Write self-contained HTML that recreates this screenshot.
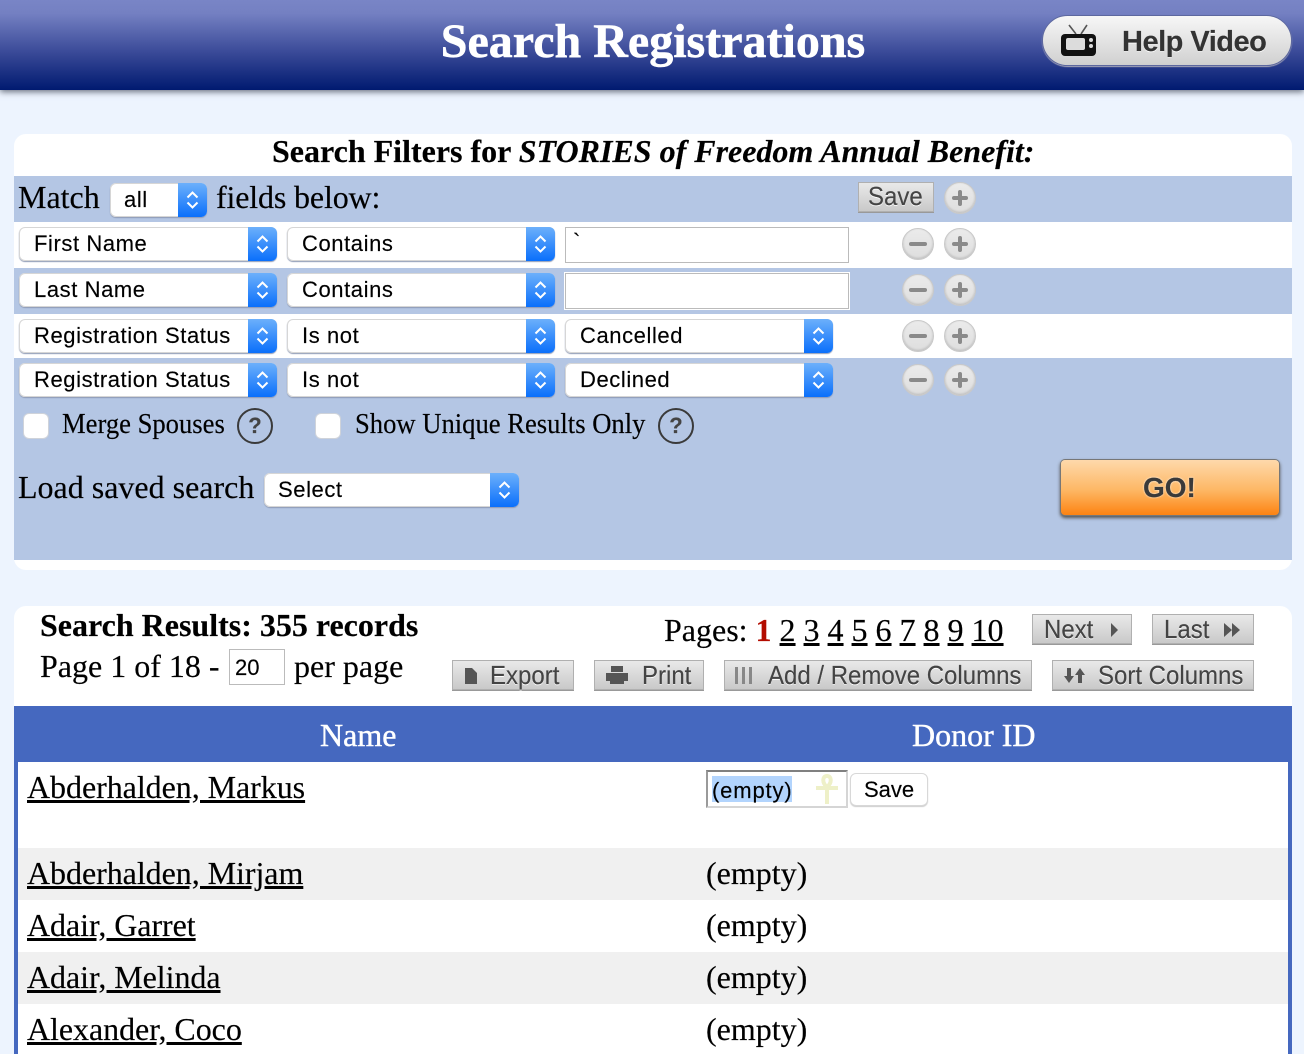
<!DOCTYPE html>
<html><head><meta charset="utf-8"><title>Search Registrations</title>
<style>
html,body{margin:0;padding:0;width:1304px;height:1054px;overflow:hidden;background:#edf4fe}
body{position:relative;font-family:"Liberation Serif",serif;color:#000;-webkit-text-stroke:.15px currentColor}
div,span,a.t{position:absolute;white-space:nowrap}
.t{line-height:1}
.sel{background:#fff;border-radius:6px;box-shadow:inset 0 0 0 1px #d6d6d6,0 1px 1px #8e9ab5;overflow:hidden;height:34px}
.sel b{position:absolute;right:0;top:0;bottom:0;width:29px;background:linear-gradient(#6cb0fb,#0a6ffb)}
.sel svg{position:absolute;right:7px;top:7px}
.sel span{top:6px;font:22px/22px "Liberation Sans",sans-serif;left:15px;letter-spacing:.58px}
.rb{width:30px;height:30px;border-radius:50%;background:linear-gradient(#ebebeb,#dedede);border:1px solid #c9c9c9;box-shadow:inset 0 -1px 2px #bbb}
.rb:before{content:"";position:absolute;left:6px;top:13px;width:18px;height:4px;background:#8a8a8a;border-radius:2px}
.plus:before{left:7px;width:16px}
.plus:after{content:"";position:absolute;left:13px;top:7px;width:4px;height:16px;background:#8a8a8a;border-radius:2px}
.btn{background:linear-gradient(#e9e9e9,#c9c9c9);border:1px solid #b0b0b0;box-sizing:border-box;height:30px;box-shadow:0 1px 0 #999;color:#444}
.btn span{top:1px;font:26px/26px "Liberation Sans",sans-serif;transform-origin:0 0;transform:scaleX(.923);text-shadow:0 1px 0 #fff}
.cb{width:24px;height:24px;background:#fff;border-radius:5px;box-shadow:0 0 0 1px #cfd3da}
.q{width:32px;height:32px;border:2px solid #3a3a3a;border-radius:50%;text-align:center;font:bold 22px/32px "Liberation Sans",sans-serif;color:#444}
.inp{background:#fff;box-sizing:border-box;border:1px solid #bbb}
.row{left:14px;width:1278px}
.name{left:27px;font-size:32px;line-height:36px;text-decoration:underline;color:#000;letter-spacing:-.05px}
.em{left:706px;font-size:32px;line-height:36px}
.lbl{top:409px;font-size:28px;line-height:32px;transform-origin:0 0;transform:scaleX(.95)}
</style></head><body>
<svg width="0" height="0" style="position:absolute"><symbol id="ar" viewBox="0 0 15 20"><path d="M2.500 7.500 7.500 2.500 12.500 7.500M2.500 12.500 7.500 17.500 12.500 12.500" fill="none" stroke="#fff" stroke-width="2"/></symbol></svg>

<div style="left:0;top:0;width:1304px;height:90px;background:linear-gradient(#7985c6 0,#7480c2 15%,#3a4a98 58%,#001a70 100%);box-shadow:0 2px 6px #6b7280"></div>
<span class="t" style="left:0;width:1306px;text-align:center;top:16px;font:bold 48px/52px 'Liberation Serif',serif;color:#fff;-webkit-text-stroke:.5px #fff">Search Registrations</span>

<div style="left:1042px;top:15px;width:250px;height:51px;box-sizing:border-box;border-radius:26px;background:linear-gradient(#f7f7f7,#d0d0d0);border:1px solid #5d689f;box-shadow:0 1px 1px #aab"></div>
<svg style="position:absolute;left:1060px;top:24px" width="38" height="34" viewBox="0 0 38 34"><path d="M9 1l7 9M27 1l-6 9" stroke="#555" stroke-width="1.600" fill="none"/><rect x="1" y="10" width="35" height="22" rx="4" fill="#111"/><rect x="6" y="14" width="19" height="12" rx="2" fill="#dcdcdc"/><circle cx="31" cy="16" r="2" fill="#ddd"/><circle cx="31" cy="22" r="2" fill="#ddd"/></svg>
<span class="t" style="left:1122px;top:26px;font:bold 29px/32px 'Liberation Sans',sans-serif;letter-spacing:-.5px;color:#333;text-shadow:0 1px 0 #fff">Help Video</span>

<!-- filter panel -->
<div style="left:14px;top:134px;width:1278px;height:436px;background:#fff;border-radius:12px"></div>
<div class="row" style="top:176px;height:46px;background:#b4c6e4"></div>
<div class="row" style="top:268px;height:46px;background:#b4c6e4"></div>
<div class="row" style="top:358px;height:202px;background:#b4c6e4"></div>

<span class="t" style="left:272px;top:133px;font:bold 32px/36px 'Liberation Serif',serif">Search Filters for <i>STORIES of Freedom Annual Benefit:</i></span>

<span class="t" style="left:18px;top:179px;font-size:32px;line-height:36px">Match</span>
<div class="sel" style="left:110px;top:183px;width:97px"><span style="left:14px">all</span><b></b><svg width="15" height="20"><use href="#ar"/></svg></div>
<span class="t" style="left:216px;top:179px;font-size:32px;line-height:36px;letter-spacing:-.15px">fields below:</span>
<div class="btn" style="left:858px;top:182px;width:76px"><span style="left:9px;top:0">Save</span></div>
<div class="rb plus" style="left:944px;top:182px"></div>

<div class="sel" style="left:19px;top:227px;width:258px"><span>First Name</span><b></b><svg width="15" height="20"><use href="#ar"/></svg></div>
<div class="sel" style="left:287px;top:227px;width:268px"><span>Contains</span><b></b><svg width="15" height="20"><use href="#ar"/></svg></div>
<div class="inp" style="left:565px;top:227px;width:284px;height:36px"><span style="left:7px;top:3px;font:22px/22px 'Liberation Sans',sans-serif">`</span></div>
<div class="rb" style="left:902px;top:228px"></div><div class="rb plus" style="left:944px;top:228px"></div>

<div class="sel" style="left:19px;top:273px;width:258px"><span>Last Name</span><b></b><svg width="15" height="20"><use href="#ar"/></svg></div>
<div class="sel" style="left:287px;top:273px;width:268px"><span>Contains</span><b></b><svg width="15" height="20"><use href="#ar"/></svg></div>
<div class="inp" style="left:565px;top:273px;width:284px;height:36px;box-shadow:0 0 0 1px #fff"></div>
<div class="rb" style="left:902px;top:274px"></div><div class="rb plus" style="left:944px;top:274px"></div>

<div class="sel" style="left:19px;top:319px;width:258px"><span>Registration Status</span><b></b><svg width="15" height="20"><use href="#ar"/></svg></div>
<div class="sel" style="left:287px;top:319px;width:268px"><span>Is not</span><b></b><svg width="15" height="20"><use href="#ar"/></svg></div>
<div class="sel" style="left:565px;top:319px;width:268px"><span>Cancelled</span><b></b><svg width="15" height="20"><use href="#ar"/></svg></div>
<div class="rb" style="left:902px;top:320px"></div><div class="rb plus" style="left:944px;top:320px"></div>

<div class="sel" style="left:19px;top:363px;width:258px"><span>Registration Status</span><b></b><svg width="15" height="20"><use href="#ar"/></svg></div>
<div class="sel" style="left:287px;top:363px;width:268px"><span>Is not</span><b></b><svg width="15" height="20"><use href="#ar"/></svg></div>
<div class="sel" style="left:565px;top:363px;width:268px"><span>Declined</span><b></b><svg width="15" height="20"><use href="#ar"/></svg></div>
<div class="rb" style="left:902px;top:364px"></div><div class="rb plus" style="left:944px;top:364px"></div>

<div class="cb" style="left:24px;top:414px"></div>
<span class="t lbl" style="left:62px">Merge Spouses</span>
<div class="q" style="left:237px;top:408px">?</div>
<div class="cb" style="left:316px;top:414px"></div>
<span class="t lbl" style="left:355px">Show Unique Results Only</span>
<div class="q" style="left:658px;top:408px">?</div>

<span class="t" style="left:18px;top:469px;font-size:32px;line-height:36px">Load saved search</span>
<div class="sel" style="left:264px;top:473px;width:255px"><span style="left:14px">Select</span><b></b><svg width="15" height="20"><use href="#ar"/></svg></div>

<div style="left:1061px;top:460px;width:218px;height:55px;border-radius:4px;background:linear-gradient(#fed9ab,#fdb764 55%,#fd8312);box-shadow:0 0 0 1px #777,0 2px 3px 1px #555"></div>
<span class="t" style="left:1143px;top:472px;font:bold 28px/32px 'Liberation Sans',sans-serif;color:#3a3a3a;text-shadow:0 0 2px #fff">GO!</span>

<!-- results panel -->
<div style="left:14px;top:606px;width:1278px;height:110px;background:#fff;border-radius:12px 12px 0 0"></div>
<span class="t" style="left:40px;top:606px;font:bold 32px/38px 'Liberation Serif',serif">Search Results: 355 records</span>
<span class="t" style="left:40px;top:648px;font-size:32px;line-height:36px">Page 1 of 18 -</span>
<div class="inp" style="left:229px;top:649px;width:56px;height:36px"><span style="left:5px;top:7px;font:22px/22px 'Liberation Sans',sans-serif">20</span></div>
<span class="t" style="left:294px;top:648px;font-size:32px;line-height:36px">per page</span>

<span class="t" style="left:664px;top:612px;font-size:32px;line-height:36px">Pages: <b style="color:#b30c00">1</b>&nbsp;<u>2</u>&nbsp;<u>3</u>&nbsp;<u>4</u>&nbsp;<u>5</u>&nbsp;<u>6</u>&nbsp;<u>7</u>&nbsp;<u>8</u>&nbsp;<u>9</u>&nbsp;<u>10</u></span>

<div class="btn" style="left:1032px;top:614px;width:100px"><span style="left:11px">Next</span><svg style="position:absolute;left:77px;top:8px" width="9" height="14"><path d="M1 0 8 7 1 14Z" fill="#555"/></svg></div>
<div class="btn" style="left:1152px;top:614px;width:102px"><span style="left:11px">Last</span><svg style="position:absolute;left:70px;top:8px" width="18" height="14"><path d="M1 0 9 7 1 14ZM9 0 17 7 9 14Z" fill="#555"/></svg></div>
<div class="btn" style="left:452px;top:660px;width:122px"><svg style="position:absolute;left:11px;top:7px" width="14" height="16"><path d="M1 0H8L13 5V16H1Z" fill="#555"/></svg><span style="left:37px">Export</span></div>
<div class="btn" style="left:594px;top:660px;width:110px"><svg style="position:absolute;left:10px;top:5px" width="24" height="18"><path d="M6 0H18V6H6ZM1 7H23V15H19V18H5V15H1Z" fill="#555"/></svg><span style="left:47px">Print</span></div>
<div class="btn" style="left:724px;top:660px;width:308px"><svg style="position:absolute;left:9px;top:6px" width="20" height="17"><path d="M1 0H4V17H1ZM8 0H11V17H8ZM15 0H18V17H15Z" fill="#888"/></svg><span style="left:43px">Add / Remove Columns</span></div>
<div class="btn" style="left:1052px;top:660px;width:202px"><svg style="position:absolute;left:11px;top:7px" width="22" height="15"><path d="M3 0H7V8H10L5 15 0 8H3ZM14 15V7H11L16 0 21 7H18V15Z" fill="#555"/></svg><span style="left:45px">Sort Columns</span></div>

<!-- table -->
<div style="left:14px;top:706px;width:1278px;height:56px;background:#4568bf"></div>
<div style="left:14px;top:762px;width:1278px;height:292px;background:#fff"></div>
<div style="left:18px;top:848px;width:1270px;height:52px;background:#f0f0f0"></div>
<div style="left:18px;top:952px;width:1270px;height:52px;background:#f0f0f0"></div>
<div style="left:14px;top:762px;width:4px;height:292px;background:#4568bf"></div>
<div style="left:1288px;top:762px;width:4px;height:292px;background:#4568bf"></div>
<span class="t" style="left:320px;top:717px;font-size:32px;line-height:36px;color:#fff;-webkit-text-stroke:.4px #fff">Name</span>
<span class="t" style="left:912px;top:717px;font-size:32px;line-height:36px;color:#fff;-webkit-text-stroke:.4px #fff">Donor ID</span>

<a class="t name" style="top:769px">Abderhalden, Markus</a>
<div style="left:706px;top:770px;width:142px;height:38px;box-sizing:border-box;background:#fff;border:2px solid #d5d5d5;border-top:2px solid #808080;border-left:2px solid #9a9a9a"></div>
<div style="left:712px;top:776px;width:80px;height:26px;background:#b2d4fd"></div>
<span class="t" style="left:712px;top:779px;font:22px/24px 'Liberation Sans',sans-serif;letter-spacing:.85px">(empty)</span>
<svg style="position:absolute;left:814px;top:773px" width="26" height="32"><path d="M13 14C8 10 8 3 13 3S18 10 13 14ZM2 15H24M13 14V31" fill="none" stroke="#eef0c8" stroke-width="4"/></svg>
<div style="left:850px;top:773px;width:78px;height:33px;box-sizing:border-box;background:#fff;border:1px solid #d8d8d8;border-radius:6px;box-shadow:0 1px 1px #ccc"></div>
<span class="t" style="left:864px;top:778px;font:22px/24px 'Liberation Sans',sans-serif">Save</span>

<a class="t name" style="top:855px">Abderhalden, Mirjam</a><span class="t em" style="top:855px">(empty)</span>
<a class="t name" style="top:907px">Adair, Garret</a><span class="t em" style="top:907px">(empty)</span>
<a class="t name" style="top:959px">Adair, Melinda</a><span class="t em" style="top:959px">(empty)</span>
<a class="t name" style="top:1011px">Alexander, Coco</a><span class="t em" style="top:1011px">(empty)</span>
</body></html>
